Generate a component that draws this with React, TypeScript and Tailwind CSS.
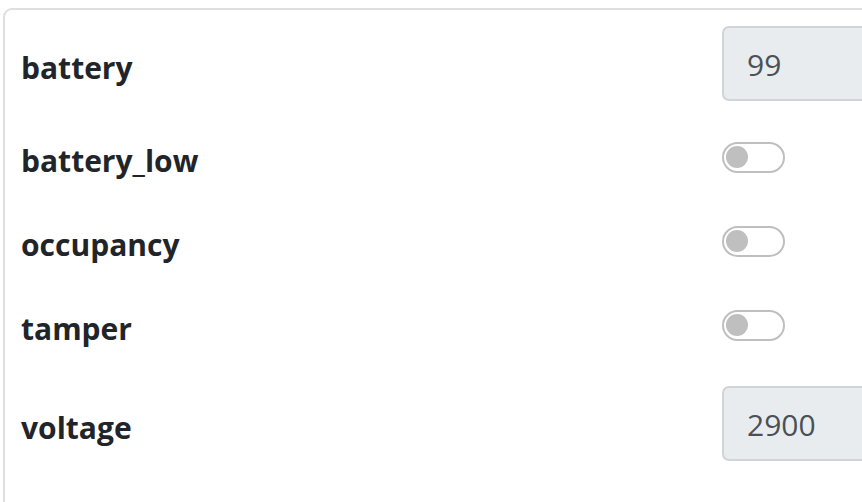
export default function App() {
  const rows: { label: string; kind: 'input' | 'switch'; value?: string }[] = [
    { label: 'battery', kind: 'input', value: '99' },
    { label: 'battery_low', kind: 'switch' },
    { label: 'occupancy', kind: 'switch' },
    { label: 'tamper', kind: 'switch' },
    { label: 'voltage', kind: 'input', value: '2900' },
  ]

  return (
    <div className="w-screen h-screen overflow-hidden bg-white" style={{ fontFamily: '"Open Sans", "Noto Sans", sans-serif' }}>
      <div className="ml-[3px] mt-[8px] w-[1000px] h-[700px] border-2 border-[#dfdfdf] rounded-[9px] px-[16px] pt-[16px]">
        {rows.map((r, i) => (
          <div
            key={r.label}
            className={`flex items-center ${
              r.kind === 'input' ? 'h-[75px]' : 'h-[84px]'
            } ${i === 1 ? 'mt-[14px]' : ''} ${i === 4 ? 'mt-[19px]' : ''}`}
          >
            <div className="w-[701px] pt-[8px] text-[30px] font-bold text-[#212529] leading-none">{r.label}</div>
            {r.kind === 'input' ? (
              <div className="flex-1 h-[75px] flex items-center pt-[2px] bg-[#e9ecef] border-2 border-[#ced4da] rounded-[7px] pl-[23px] text-[30px] text-[#495057]">
                {r.value}
              </div>
            ) : (
              <div className="w-[63px] h-[31px] rounded-full border-2 border-[#bfbfbf] flex items-center pl-[2px]">
                <div className="w-[22px] h-[22px] rounded-full bg-[#bfbfbf]" />
              </div>
            )}
          </div>
        ))}
      </div>
    </div>
  )
}
